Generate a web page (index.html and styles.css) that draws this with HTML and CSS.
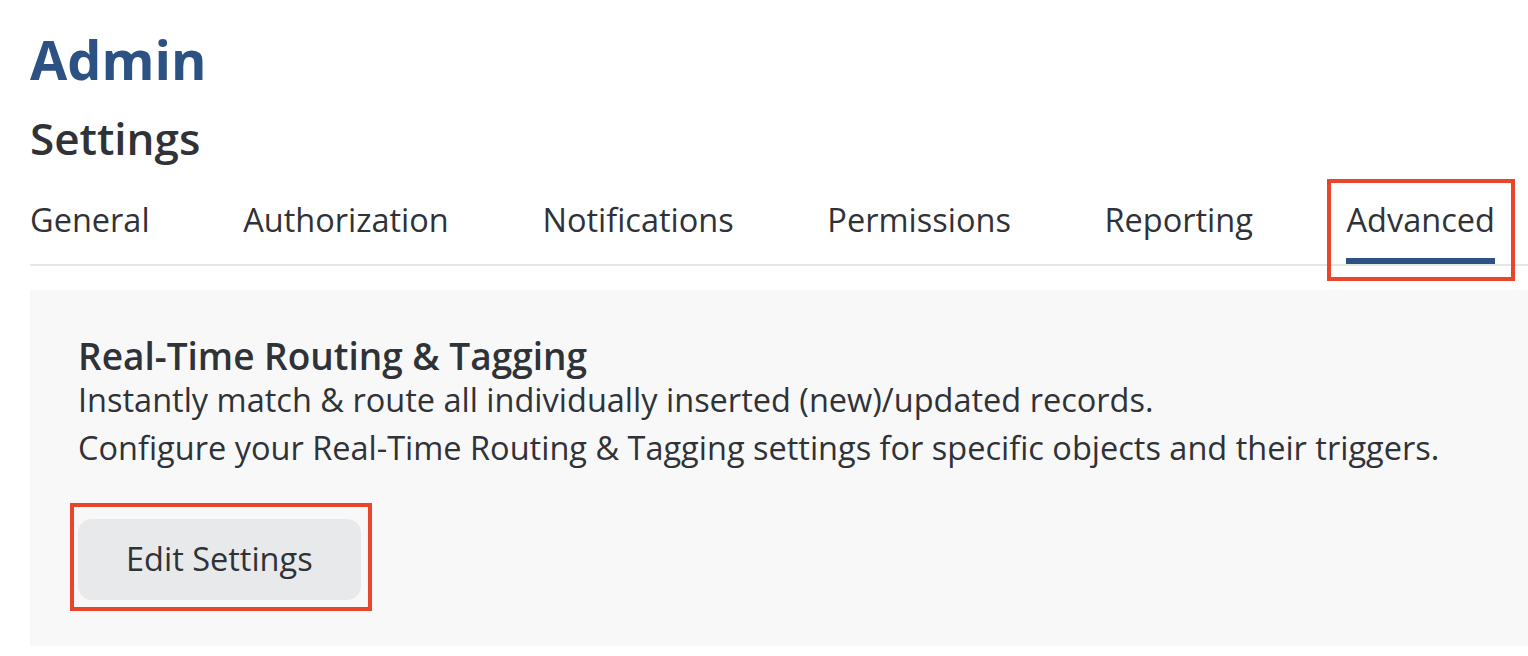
FILE: index.html
```html
<!DOCTYPE html>
<html lang="en">
<head>
<meta charset="utf-8">
<title>Admin Settings</title>
<link rel="stylesheet" href="styles.css">
</head>
<body>
<div class="page">
  <h1 class="app-title">Admin</h1>
  <h2 class="page-title">Settings</h2>
  <nav class="tabs">
    <a class="tab">General</a>
    <a class="tab">Authorization</a>
    <a class="tab">Notifications</a>
    <a class="tab">Permissions</a>
    <a class="tab">Reporting</a>
    <a class="tab tab-active highlight-tab">Advanced</a>
  </nav>
  <section class="panel">
    <h3 class="panel-title">Real-Time Routing &amp; Tagging</h3>
    <p class="panel-text">Instantly match &amp; route all individually inserted (new)/updated records.</p>
    <p class="panel-text">Configure your Real-Time Routing &amp; Tagging settings for specific objects and their triggers.</p>
    <div class="actions">
      <button class="btn highlight-btn">Edit Settings</button>
    </div>
  </section>
</div>
</body>
</html>
```

FILE: styles.css
```css
* { box-sizing: border-box; }
html, body { margin: 0; padding: 0; background: #ffffff; }
body {
  font-family: "Open Sans", "Liberation Sans", sans-serif;
  color: #2f3237;
}
.page {
  padding: 27px 0 0 30px;
}
.app-title {
  margin: 0;
  font-size: 54px;
  line-height: 64px;
  font-weight: 700;
  color: #2b5282;
}
.page-title {
  margin: 19px 0 0 0;
  font-size: 44px;
  line-height: 56px;
  font-weight: 600;
  color: #2f3237;
}
.tabs {
  display: flex;
  gap: 93.6px;
  margin-top: 30px;
  border-bottom: 2px solid #e6e6e6;
}
.tab {
  position: relative;
  font-size: 32.5px;
  line-height: 48px;
  padding-bottom: 14px;
  border-bottom: 6px solid transparent;
  color: #2f3237;
}
.tab-active {
  border-bottom-color: #2b5282;
}
.highlight-tab::after {
  content: "";
  position: absolute;
  left: -19px;
  right: -20px;
  top: -17px;
  bottom: -23px;
  border: 4px solid #e8452b;
}
.panel {
  margin-top: 24px;
  background: #f8f8f8;
  padding: 46px 48px 0 48px;
  height: 356px;
}
.panel-title {
  margin: 0;
  font-size: 37px;
  line-height: 40px;
  font-weight: 600;
}
.panel-text {
  margin: 0;
  font-size: 32.5px;
  line-height: 48px;
}
.actions {
  margin-top: 47px;
}
.btn {
  position: relative;
  font-family: inherit;
  font-size: 32.5px;
  line-height: 48px;
  padding: 16px 48px 17px 48px;
  border: 0;
  border-radius: 14px;
  background: #e8e9eb;
  color: #2f3237;
}
.highlight-btn::after {
  content: "";
  position: absolute;
  left: -8px;
  right: -11px;
  top: -16px;
  bottom: -11px;
  border: 4px solid #e8452b;
}
```
